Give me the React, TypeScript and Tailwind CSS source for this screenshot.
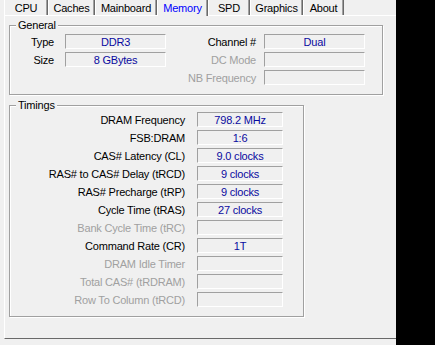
import React from "react";

const tabs = [
  { name: "CPU", w: "w-[44px]" },
  { name: "Caches", w: "w-[47px]" },
  { name: "Mainboard", w: "w-[62px]" },
  { name: "Memory", w: "w-[51px]", active: true },
  { name: "SPD", w: "w-[42px]" },
  { name: "Graphics", w: "w-[53px]" },
  { name: "About", w: "w-[41px]" },
];

function Field({ value }: { value?: string }) {
  return (
    <div className="h-[15px] border border-t-[#a0a0a0] border-l-[#a0a0a0] border-b-white border-r-white flex items-center justify-center text-[#0a0aa0] pt-[2px]">
      {value ?? ""}
    </div>
  );
}

function Label({ text, disabled, pr }: { text: string; disabled?: boolean; pr: string }) {
  return (
    <div
      className={`h-[15px] flex items-center justify-end whitespace-nowrap pt-[2px] ${pr} ${
        disabled ? "text-[#a0a0a0]" : "text-black"
      }`}
    >
      {text}
    </div>
  );
}

function Group({ title, className, children }: { title: string; className: string; children: React.ReactNode }) {
  return (
    <div
      className={`relative border border-[#a0a0a0] shadow-[inset_1px_1px_0_#ffffff,1px_1px_0_#ffffff] ${className}`}
    >
      <span className="absolute left-[6px] top-[-7px] px-[2px] bg-[#f0f0f0] text-black leading-[13px]">
        {title}
      </span>
      {children}
    </div>
  );
}

const timings: { label: string; value?: string; disabled?: boolean }[] = [
  { label: "DRAM Frequency", value: "798.2 MHz" },
  { label: "FSB:DRAM", value: "1:6" },
  { label: "CAS# Latency (CL)", value: "9.0 clocks" },
  { label: "RAS# to CAS# Delay (tRCD)", value: "9 clocks" },
  { label: "RAS# Precharge (tRP)", value: "9 clocks" },
  { label: "Cycle Time (tRAS)", value: "27 clocks" },
  { label: "Bank Cycle Time (tRC)", disabled: true },
  { label: "Command Rate (CR)", value: "1T" },
  { label: "DRAM Idle Timer", disabled: true },
  { label: "Total CAS# (tRDRAM)", disabled: true },
  { label: "Row To Column (tRCD)", disabled: true },
];

export default function App() {
  return (
    <div className="w-[435px] h-[345px] flex bg-black overflow-hidden font-['Liberation_Sans',Arial,sans-serif] text-[11px] leading-[13px] tracking-[-0.2px]">
      <div className="w-[396px] h-full bg-[#f0f0f0] flex flex-col overflow-hidden">
        <div className="flex items-end h-[15px] pl-[4px]">
          {tabs.map((t) =>
            t.active ? (
              <div
                key={t.name}
                className={`${t.w} shrink-0 h-[16px] -mb-px relative z-10 bg-[#f0f0f0] border-l border-r border-l-white border-r-[#696969] shadow-[inset_-1px_0_0_#a0a0a0] flex items-start justify-center pt-[2px] text-[#0000ff]`}
              >
                {t.name}
              </div>
            ) : (
              <div
                key={t.name}
                className={`${t.w} shrink-0 h-[15px] border-l border-r border-l-white border-r-[#696969] shadow-[inset_-1px_0_0_#a0a0a0] flex items-start justify-center pt-[2px] text-black`}
              >
                {t.name}
              </div>
            )
          )}
        </div>
        <div className="ml-[4px] w-[400px] h-[324px] shrink-0 border-l border-t border-b border-l-white border-t-white border-b-[#696969] flex flex-col">
          <Group title="General" className="ml-[4px] mt-[9px] w-[374px] h-[70px] pt-[8px]">
            <div className="grid grid-cols-[55px_101px_98px_101px] gap-y-[3px]">
              <Label text="Type" pr="pr-[11px]" />
              <Field value="DDR3" />
              <Label text="Channel #" pr="pr-[8px]" />
              <Field value="Dual" />
              <Label text="Size" pr="pr-[11px]" />
              <Field value="8 GBytes" />
              <Label text="DC Mode" disabled pr="pr-[8px]" />
              <Field />
              <div />
              <div />
              <Label text="NB Frequency" disabled pr="pr-[8px]" />
              <Field />
            </div>
          </Group>
          <Group title="Timings" className="ml-[4px] mt-[10px] w-[295px] h-[212px] pt-[6px]">
            <div className="grid grid-cols-[187px_86px] gap-y-[3px]">
              {timings.map((r) => (
                <React.Fragment key={r.label}>
                  <Label text={r.label} disabled={r.disabled} pr="pr-[12px]" />
                  <Field value={r.value} />
                </React.Fragment>
              ))}
            </div>
          </Group>
        </div>
      </div>
      <div className="flex-1 bg-black" />
    </div>
  );
}
